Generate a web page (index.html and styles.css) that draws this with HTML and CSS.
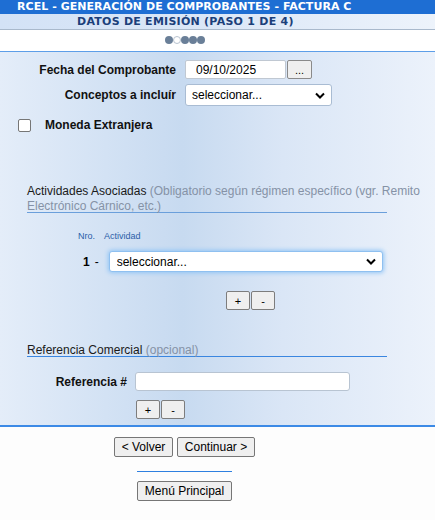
FILE: index.html
```html
<!DOCTYPE html>
<html lang="es">
<head>
<meta charset="utf-8">
<link rel="stylesheet" href="styles.css">
</head>
<body>
<div class="title">RCEL - GENERACIÓN DE COMPROBANTES - FACTURA C</div>
<div class="subtitle">DATOS DE EMISIÓN (PASO 1 DE 4)</div>
<div class="steps">
  <span class="dot"></span><span class="dot hollow"></span><span class="dot"></span><span class="dot"></span><span class="dot"></span>
</div>
<div class="panel">
  <div class="formrow r1">
    <label class="lbl">Fecha del Comprobante</label>
    <input class="date" type="text" value="09/10/2025">
    <button class="btn dots-btn">...</button>
  </div>
  <div class="formrow r2">
    <label class="lbl">Conceptos a incluír</label>
    <select class="sel sel1"><option>seleccionar...</option></select>
  </div>
  <div class="checkrow">
    <span class="chk"></span>
    <span class="chklbl">Moneda Extranjera</span>
  </div>

  <div class="section sec1">
    <div class="sectext"><span class="sectitle">Actividades Asociadas</span> <span class="secnote">(Obligatorio según régimen específico (vgr. Remito Electrónico Cárnico, etc.)</span></div>
  </div>
  <div class="colhead"><span>Nro.</span><span>Actividad</span></div>
  <div class="actrow">
    <span class="num">1</span><span class="dash">-</span>
    <select class="sel sel2"><option>seleccionar...</option></select>
  </div>
  <div class="pm pm1"><button class="btn sq">+</button><button class="btn sq">-</button></div>

  <div class="section sec2">
    <div class="sectext"><span class="sectitle">Referencia Comercial</span> <span class="secnote">(opcional)</span></div>
  </div>
  <div class="refrow">
    <label class="lbl">Referencia #</label>
    <input class="ref" type="text">
  </div>
  <div class="pm pm2"><button class="btn sq">+</button><button class="btn sq">-</button></div>
</div>
<div class="footer">
  <div class="navbtns"><button class="btn fb back">&lt; Volver</button><button class="btn fb next">Continuar &gt;</button></div>
  <div class="sep"></div>
  <button class="btn fb menu">Menú Principal</button>
</div>
</body>
</html>
```
FILE: styles.css
```css
* { box-sizing: border-box; }
html, body { margin: 0; padding: 0; background: #fdfdfd; }
body { width: 435px; height: 520px; overflow: hidden; font-family: "Liberation Sans", Arial, sans-serif; font-size: 12px; color: #000; }

.title {
  height: 14px;
  background: #1e6ed3;
  color: #fff;
  font-family: "DejaVu Sans", Verdana, sans-serif;
  font-weight: bold;
  font-size: 11px;
  line-height: 14px;
  padding-left: 17px;
  letter-spacing: 0.05px;
  white-space: nowrap;
}
.subtitle {
  height: 16px;
  background: linear-gradient(to right, #d3e2f6 0%, #dbe7f7 50%, #edf3fb 100%);
  border-bottom: 1px solid #a9b9cc;
  color: #1b3f7a;
  font-family: "DejaVu Sans", Verdana, sans-serif;
  font-weight: bold;
  font-size: 11px;
  line-height: 15px;
  padding-left: 77px;
  letter-spacing: 0.25px;
  white-space: nowrap;
}
.steps {
  height: 22px;
  background: #fff;
  border-bottom: 1px solid #5d9ee8;
  display: flex;
  align-items: center;
  padding-left: 165px;
  padding-bottom: 1px;
}
.dot {
  width: 8px; height: 8px; border-radius: 50%;
  background: #6a7f98;
}
.dot.hollow { background: #fff; border: 1px solid #b7c2cf; }

.panel {
  height: 375px;
  background: linear-gradient(to right, #e4edf9 0%, #d6e4f5 20%, #c7daf0 42%, #dae6f6 65%, #ecf2fb 100%);
  border-bottom: 2px solid #3c8ae6;
  padding-top: 8px;
}
.formrow { display: flex; align-items: center; }
.lbl { font-weight: bold; color: #111; text-align: right; }
.r1 .lbl, .r2 .lbl { width: 177px; padding-right: 1px; }
.r1 { height: 19px; }
.r2 { height: 22px; margin-top: 5px; }
.date {
  margin-left: 8px;
  width: 101px; height: 19px;
  border: 1px solid #c0c8d2;
  border-radius: 2px;
  background: #fff;
  font-family: "Liberation Sans", Arial, sans-serif;
  font-size: 12px;
  padding: 0 0 0 10px;
  color: #000;
}
.btn {
  font-family: "Liberation Sans", Arial, sans-serif;
  font-size: 12px;
  color: #000;
  background: #efefef;
  border: 1px solid #767676;
  border-radius: 2px;
  padding: 0;
}
.dots-btn { width: 25px; height: 19px; margin-left: 1px; font-size: 11px; line-height: 12px; border-color: #8a8a8a; }
.sel {
  appearance: none;
  -webkit-appearance: none;
  background: #fff url("data:image/svg+xml,%3Csvg xmlns='http://www.w3.org/2000/svg' width='10' height='7' viewBox='0 0 10 7'%3E%3Cpath d='M1 1.5 L5 5.5 L9 1.5' fill='none' stroke='%23000' stroke-width='2'/%3E%3C/svg%3E") no-repeat right 6px center;
  border: 1px solid #a9bcd3;
  border-radius: 3px;
  font-family: "Liberation Sans", Arial, sans-serif;
  font-size: 12px;
  color: #000;
  padding: 0 0 0 6px;
}
.sel1 { margin-left: 8px; width: 147px; height: 22px; }
.checkrow { display: flex; align-items: center; margin-top: 11px; height: 16px; }
.chk {
  width: 13px; height: 13px;
  margin-left: 18px;
  border: 1px solid #767676;
  border-radius: 2px;
  background: #fff;
}
.chklbl { margin-left: 14px; font-weight: bold; color: #111; }

.section {
  margin-left: 27px;
  width: 360px;
  font-size: 12px;
  border-bottom: 1px solid #6a9fdb;
}
.sectext { width: 396px; line-height: 15px; margin-bottom: -2px; }
.sec1 { margin-top: 51px; }
.sectitle { color: #1a1a1a; }
.secnote { color: #8592a6; }
.colhead {
  margin-top: 18px;
  margin-left: 78px;
  font-size: 9px;
  color: #2b5ea8;
  display: flex;
  gap: 9px;
  height: 11px;
  line-height: 11px;
}
.actrow { display: flex; align-items: center; margin-top: 9px; height: 21px; }
.num { margin-left: 83px; font-weight: bold; font-size: 12px; }
.dash { margin-left: 5px; font-size: 12px; }
.sel2 {
  margin-left: 10px;
  width: 274px; height: 21px;
  border: 1px solid #8fc0f0;
  box-shadow: 0 0 4px 1px #93c6f5;
  padding-left: 7px;
}
.pm { display: flex; gap: 1px; }
.pm1 { margin-left: 226px; margin-top: 19px; }
.pm2 { margin-left: 136px; margin-top: 9px; }
.sq { width: 24px; height: 19px; line-height: 14px; font-size: 11px; border-color: #7d7d7d; }
.sec2 { margin-top: 33px; border-bottom: 1px solid #3a86e0; }
.refrow { display: flex; align-items: center; margin-top: 15px; height: 19px; }
.refrow .lbl { width: 127px; }
.ref {
  margin-left: 8px;
  width: 215px; height: 19px;
  border: 1px solid #b8c4d2;
  border-radius: 3px;
  background: #fff;
}

.footer { display: flex; flex-direction: column; align-items: flex-start; padding-top: 10px; }
.navbtns { display: flex; gap: 4px; margin-left: 114px; }
.fb { height: 20px; font-size: 12px; padding: 0; line-height: 16px; }
.back { width: 59px; }
.next { width: 78px; }
.sep { width: 95px; height: 0; border-top: 1px solid #2f80e0; margin-top: 14px; margin-left: 137px; }
.menu { margin-top: 9px; width: 95px; margin-left: 137px; }
```
